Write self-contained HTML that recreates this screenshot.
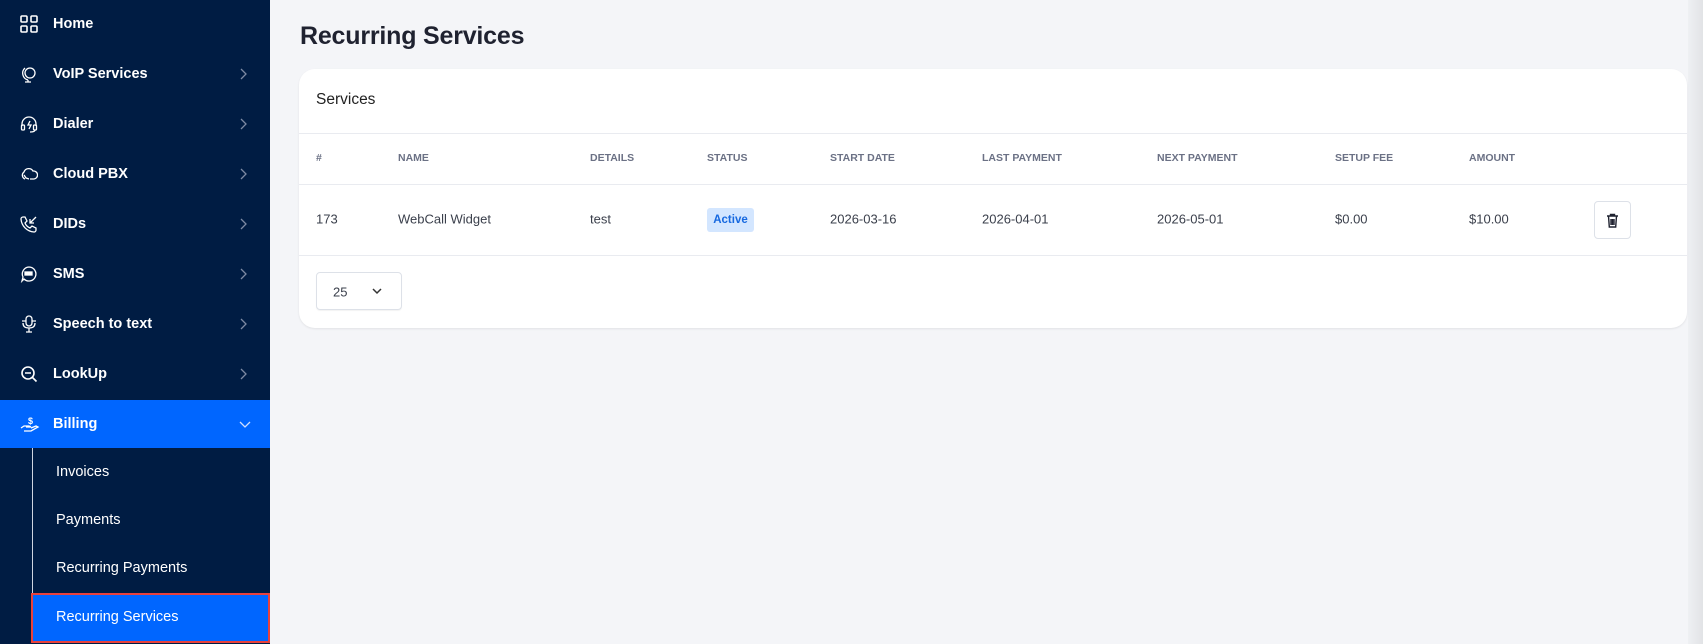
<!DOCTYPE html>
<html><head><meta charset="utf-8"><style>
*{margin:0;padding:0;box-sizing:border-box}
body{width:1703px;height:644px;overflow:hidden;background:#f4f5f8;font-family:"Liberation Sans",sans-serif;position:relative}
.sb{position:absolute;left:0;top:0;width:270px;height:644px;background:#001c43}
.it{position:absolute;left:0;width:270px;height:48px;color:#fff;font-weight:bold;font-size:14.5px}
.it span{position:absolute;left:53px;top:50%;transform:translateY(-50%)}
.it svg.ic{position:absolute;left:20px;top:50%;transform:translateY(-50%)}
.it .ch{position:absolute;left:238px;top:50%;transform:translateY(-50%)}
.sub{position:absolute;left:56px;color:#fff;font-size:14.5px;transform:translateY(-50%)}
h1{position:absolute;left:300px;top:22px;font-size:25px;color:#1f2230;font-weight:bold;letter-spacing:-0.2px}
.card{position:absolute;left:299px;top:69px;width:1388px;height:259px;background:#fff;border-radius:16px;box-shadow:0 1px 2px rgba(0,0,0,.08)}
.hl{position:absolute;left:0;right:0;height:1px;background:#e9ebf0}
.t{position:absolute;transform:translateY(-50%);font-size:13px;color:#3a3f4b;white-space:nowrap}
.h{position:absolute;transform:translateY(-50%);font-size:10.5px;color:#6b7185;font-weight:bold}
.shade{position:absolute;left:1688px;top:0;width:15px;height:644px;background:linear-gradient(90deg,#eef0f3,#e2e3e6)}
</style></head><body>
<div class="sb">
 <div class="it" style="top:0"><svg class="ic" width="18" height="18" viewBox="0 0 18 18" fill="none" stroke="#fff" stroke-width="1.6"><rect x="1" y="1" width="6" height="6" rx="1"/><rect x="11" y="1" width="6" height="6" rx="1"/><rect x="1" y="11" width="6" height="6" rx="1"/><rect x="11" y="11" width="6" height="6" rx="1"/></svg><span>Home</span></div>
 <div class="it" style="top:50px"><svg class="ic" width="18" height="18" viewBox="0 0 18 18" fill="none" stroke="#fff" stroke-width="1.3"><circle cx="10" cy="8" r="5"/><path d="M5 3a7 7 0 0 0 3 12M8 15v2M5 17h6"/></svg><span>VoIP Services</span><svg class="ch" width="10" height="14" viewBox="0 0 10 14" fill="none" stroke="#7d8aa3" stroke-width="1.3"><path d="M3 2l5 5-5 5"/></svg></div>
 <div class="it" style="top:100px"><svg class="ic" width="18" height="18" viewBox="0 0 18 18" fill="none" stroke="#fff" stroke-width="1.3"><path d="M2 11V9a7 7 0 0 1 14 0v2"/><rect x="1.5" y="10" width="3" height="5" rx="1"/><rect x="13.5" y="10" width="3" height="5" rx="1"/><path d="M15 15q0 2-5 2M10 6l-2 4h3l-2 4"/></svg><span>Dialer</span><svg class="ch" width="10" height="14" viewBox="0 0 10 14" fill="none" stroke="#7d8aa3" stroke-width="1.3"><path d="M3 2l5 5-5 5"/></svg></div>
 <div class="it" style="top:150px"><svg class="ic" width="18" height="18" viewBox="0 0 18 18" fill="none" stroke="#fff" stroke-width="1.3"><path d="M5 14a4 4 0 0 1-1-7 5 5 0 0 1 9-1 4 4 0 0 1 1 8h-4"/><path d="M4 10l2 3 3 1"/></svg><span>Cloud PBX</span><svg class="ch" width="10" height="14" viewBox="0 0 10 14" fill="none" stroke="#7d8aa3" stroke-width="1.3"><path d="M3 2l5 5-5 5"/></svg></div>
 <div class="it" style="top:200px"><svg class="ic" width="18" height="18" viewBox="0 0 18 18" fill="none" stroke="#fff" stroke-width="1.3"><path d="M3 2l2 0 2 4-2 2a9 9 0 0 0 5 5l2-2 4 2v2a2 2 0 0 1-2 2A14 14 0 0 1 1 4a2 2 0 0 1 2-2zM16 2l-6 6M10 4v4h4"/></svg><span>DIDs</span><svg class="ch" width="10" height="14" viewBox="0 0 10 14" fill="none" stroke="#7d8aa3" stroke-width="1.3"><path d="M3 2l5 5-5 5"/></svg></div>
 <div class="it" style="top:250px"><svg class="ic" width="18" height="18" viewBox="0 0 18 18" fill="none" stroke="#fff" stroke-width="1.3"><path d="M9 2a7 7 0 1 1-5 12l-2 2 1-4A7 7 0 0 1 9 2z"/><rect x="5" y="7" width="7" height="3" fill="#fff"/></svg><span>SMS</span><svg class="ch" width="10" height="14" viewBox="0 0 10 14" fill="none" stroke="#7d8aa3" stroke-width="1.3"><path d="M3 2l5 5-5 5"/></svg></div>
 <div class="it" style="top:300px"><svg class="ic" width="18" height="18" viewBox="0 0 18 18" fill="none" stroke="#fff" stroke-width="1.3"><rect x="6" y="1" width="6" height="10" rx="3"/><path d="M3 8q0 5 6 5t6-5M9 13v4M6 17h6M2 6h4M12 6h4"/></svg><span>Speech to text</span><svg class="ch" width="10" height="14" viewBox="0 0 10 14" fill="none" stroke="#7d8aa3" stroke-width="1.3"><path d="M3 2l5 5-5 5"/></svg></div>
 <div class="it" style="top:350px"><svg class="ic" width="18" height="18" viewBox="0 0 18 18" fill="none" stroke="#fff" stroke-width="1.6"><circle cx="8" cy="8" r="6"/><path d="M5 8h6M12.5 12.5l4 4"/></svg><span>LookUp</span><svg class="ch" width="10" height="14" viewBox="0 0 10 14" fill="none" stroke="#7d8aa3" stroke-width="1.3"><path d="M3 2l5 5-5 5"/></svg></div>
 <div class="it" style="top:400px;background:#0066ff"><svg class="ic" width="20" height="18" viewBox="0 0 20 18" fill="none" stroke="#fff" stroke-width="1.3"><path d="M1 13l3-2h5l2 1h-5M4 16h7l7-4-2-1-5 2"/><text x="8" y="9" font-size="9" fill="#fff" stroke="none" font-weight="bold">$</text></svg><span>Billing</span><svg class="ch" width="14" height="10" viewBox="0 0 14 10" fill="none" stroke="#cfe0ff" stroke-width="1.3"><path d="M2 3l5 5 5-5"/></svg></div>
 <div style="position:absolute;left:32px;top:448px;width:1px;height:146px;background:#cfd5e0"></div>
 <div class="sub" style="top:472px">Invoices</div>
 <div class="sub" style="top:520px">Payments</div>
 <div class="sub" style="top:568px">Recurring Payments</div>
 <div style="position:absolute;left:31px;top:593px;width:239px;height:50px;background:#0066ff;border:2px solid #e8413c"></div>
 <div class="sub" style="top:617px">Recurring Services</div>
</div>
<h1>Recurring Services</h1>
<div class="shade"></div>
<div class="card">
 <div class="t" style="left:17px;top:31px;font-size:15.5px;color:#222">Services</div>
 <div class="hl" style="top:64px"></div>
 <div class="h" style="left:17px;top:89px">#</div>
 <div class="h" style="left:99px;top:89px">NAME</div>
 <div class="h" style="left:291px;top:89px">DETAILS</div>
 <div class="h" style="left:408px;top:89px">STATUS</div>
 <div class="h" style="left:531px;top:89px">START DATE</div>
 <div class="h" style="left:683px;top:89px">LAST PAYMENT</div>
 <div class="h" style="left:858px;top:89px">NEXT PAYMENT</div>
 <div class="h" style="left:1036px;top:89px">SETUP FEE</div>
 <div class="h" style="left:1170px;top:89px">AMOUNT</div>
 <div class="hl" style="top:115px"></div>
 <div class="t" style="left:17px;top:150px">173</div>
 <div class="t" style="left:99px;top:150px">WebCall Widget</div>
 <div class="t" style="left:291px;top:150px">test</div>
 <div style="position:absolute;left:408px;top:139px;width:47px;height:24px;background:#d3e6ff;border-radius:3px;color:#1769e0;font-size:11.5px;font-weight:bold;line-height:24px;text-align:center">Active</div>
 <div class="t" style="left:531px;top:150px">2026-03-16</div>
 <div class="t" style="left:683px;top:150px">2026-04-01</div>
 <div class="t" style="left:858px;top:150px">2026-05-01</div>
 <div class="t" style="left:1036px;top:150px">$0.00</div>
 <div class="t" style="left:1170px;top:150px">$10.00</div>
 <div style="position:absolute;left:1295px;top:132px;width:37px;height:38px;border:1px solid #dde1e8;border-radius:4px;background:#fff"><svg style="position:absolute;left:11px;top:11px" width="13" height="15" viewBox="0 0 13 15" fill="none" stroke="#1f2230" stroke-width="1.4"><path d="M1 3h11M4.5 3V1.5h4V3M2.5 3l.8 11h6.4l.8-11M5 6v6M6.5 6v6M8 6v6"/></svg></div>
 <div class="hl" style="top:186px"></div>
 <div style="position:absolute;left:17px;top:203px;width:86px;height:38px;border:1px solid #dde1e8;border-radius:4px;box-shadow:0 1px 1px rgba(0,0,0,.05)"><span class="t" style="left:16px;top:19px">25</span><svg style="position:absolute;left:54px;top:14px" width="12" height="9" viewBox="0 0 12 9" fill="none" stroke="#333" stroke-width="1.5"><path d="M2 2l4 4 4-4"/></svg></div>
</div>
</body></html>
